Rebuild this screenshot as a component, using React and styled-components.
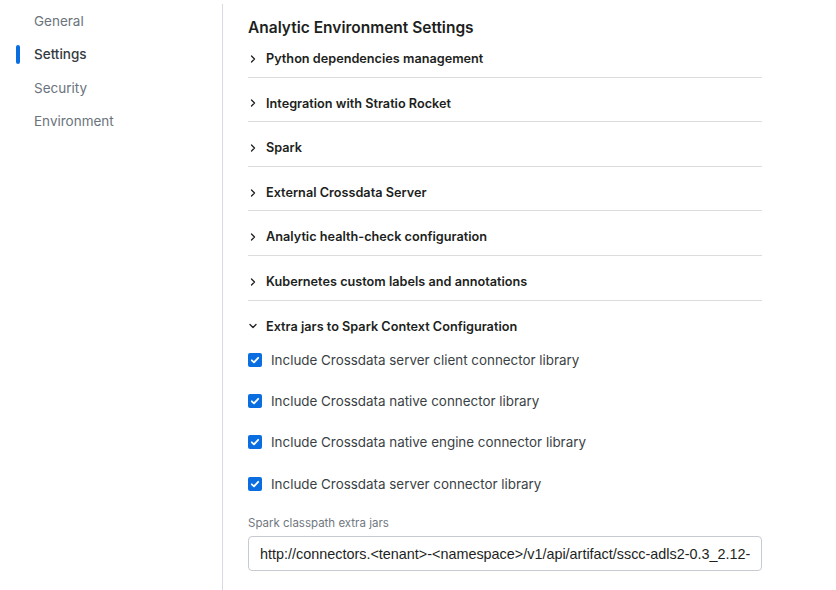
import { createGlobalStyle, styled } from "styled-components";

const GlobalStyle = createGlobalStyle`
  html, body {
    margin: 0;
    padding: 0;
    background: #fff;
    font-family: 'Inter', 'Noto Sans', sans-serif;
    color: #1d1f22;
  }
  * { box-sizing: border-box; }
`;

const sections = [
  "Python dependencies management",
  "Integration with Stratio Rocket",
  "Spark",
  "External Crossdata Server",
  "Analytic health-check configuration",
  "Kubernetes custom labels and annotations",
];

const jars = [
  "Include Crossdata server client connector library",
  "Include Crossdata native connector library",
  "Include Crossdata native engine connector library",
  "Include Crossdata server connector library",
];

function Chevron({ open }) {
  return (
    <ChevronIcon viewBox="0 0 10 10" $open={open}>
      <path d="M3.5 2 L6.5 5 L3.5 8" fill="none" stroke="#1d1f22" strokeWidth="1.3" strokeLinecap="round" strokeLinejoin="round" />
    </ChevronIcon>
  );
}

function Check() {
  return (
    <Box>
      <svg viewBox="0 0 14 14" width="14" height="14">
        <path d="M3.8 7.3 L6 9.4 L10.2 4.8" fill="none" stroke="#fff" strokeWidth="1.8" strokeLinecap="round" strokeLinejoin="round" />
      </svg>
    </Box>
  );
}

export default function App() {
  return (
    <Page>
      <GlobalStyle />
      <Sidebar>
        <NavItem>General</NavItem>
        <NavItem $active>Settings</NavItem>
        <NavItem>Security</NavItem>
        <NavItem>Environment</NavItem>
      </Sidebar>
      <Main>
        <Title>Analytic Environment Settings</Title>
        <Sections>
          {sections.map((title) => (
            <Section key={title}>
              <Header>
                <Chevron />
                {title}
              </Header>
            </Section>
          ))}
          <Section $last>
            <Header>
              <Chevron open />
              Extra jars to Spark Context Configuration
            </Header>
            <Checks>
              {jars.map((j) => (
                <CheckRow key={j}>
                  <Check />
                  {j}
                </CheckRow>
              ))}
            </Checks>
            <Field>
              <Label>Spark classpath extra jars</Label>
              <Input
                readOnly
                value="http://connectors.<tenant>-<namespace>/v1/api/artifact/sscc-adls2-0.3_2.12-"
              />
            </Field>
          </Section>
        </Sections>
      </Main>
    </Page>
  );
}

const Page = styled.div`
  display: flex;
  width: 836px;
  height: 590px;
  overflow: hidden;
`;

const Sidebar = styled.nav`
  width: 223px;
  flex-shrink: 0;
  margin-top: 4px;
  padding-top: 1px;
  border-right: 1px solid #d5dbe1;
  display: flex;
  flex-direction: column;
`;

const NavItem = styled.div`
  position: relative;
  height: 33.4px;
  line-height: 33.4px;
  padding-left: 34px;
  font-size: 13.5px;
  color: ${(p) => (p.$active ? "#353a40" : "#6b737c")};
  font-weight: ${(p) => (p.$active ? 500 : 400)};

  &::before {
    content: "";
    display: ${(p) => (p.$active ? "block" : "none")};
    position: absolute;
    left: 16px;
    top: 7px;
    width: 4px;
    height: 19px;
    border-radius: 2px;
    background: #0a6ee0;
  }
`;

const Main = styled.main`
  flex: 1;
  padding: 19px 0 0 25px;
`;

const Title = styled.h1`
  margin: 0;
  font-size: 15.5px;
  font-weight: 600;
  line-height: 18px;
  color: #1d1f22;
`;

const Sections = styled.div`
  width: 514px;
  margin-top: -4px;
`;

const Section = styled.div`
  border-bottom: ${(p) => (p.$last ? "none" : "1px solid #dcdcdc")};
`;

const Header = styled.div`
  display: flex;
  align-items: center;
  padding: 17px 0 9px;
  line-height: 17.6px;
  font-size: 12.7px;
  font-weight: 600;
  color: #1d1f22;
`;

const ChevronIcon = styled.svg`
  width: 10px;
  height: 10px;
  margin-right: 8px;
  transform: rotate(${(p) => (p.$open ? "90deg" : "0deg")});
`;

const Checks = styled.div`
  display: flex;
  flex-direction: column;
  margin-top: -5px;
`;

const CheckRow = styled.label`
  display: flex;
  align-items: center;
  height: 41.3px;
  font-size: 13.4px;
  color: #3a3f45;
`;

const Box = styled.span`
  width: 14px;
  height: 14px;
  border-radius: 2px;
  background: #0a6ee0;
  margin-right: 9px;
  display: flex;
  align-items: center;
  justify-content: center;
`;

const Field = styled.div`
  margin-top: 12px;
`;

const Label = styled.div`
  font-size: 11.5px;
  line-height: 14px;
  color: #707880;
  margin-bottom: 6px;
`;

const Input = styled.input`
  display: block;
  width: 100%;
  height: 35px;
  padding: 0 10px 0 11px;
  border: 1px solid #c5cbd1;
  border-radius: 4px;
  font-family: 'Liberation Sans', Arial, sans-serif;
  font-size: 14.4px;
  color: #1d1f22;
  outline: none;
  background: #fff;
`;
